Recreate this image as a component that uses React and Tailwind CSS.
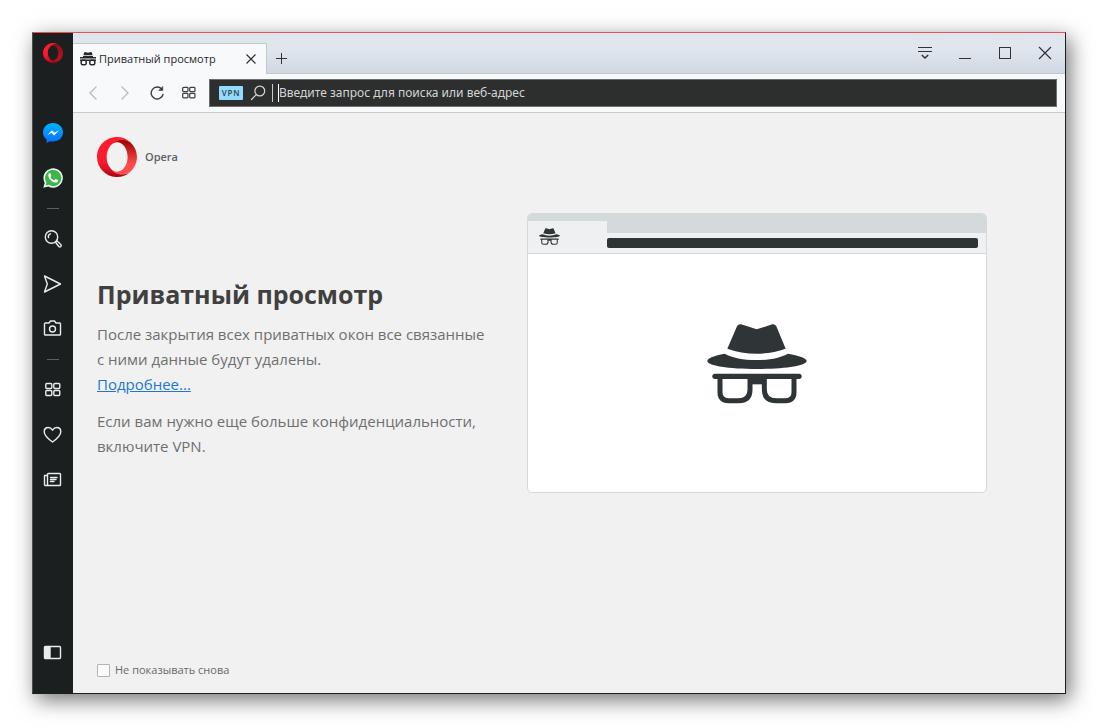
function OperaLogo({ className, id, sideTop, sideBottom }) {
  return (
    <svg viewBox="0 0 80 80" className={className} aria-hidden="true">
      <defs>
        <linearGradient id={id + "-ring"} x1="0" y1="0" x2="0" y2="1">
          <stop offset="0.3" stopColor="#ff1b2d" />
          <stop offset="0.6" stopColor="#fa1a2c" />
          <stop offset="0.8" stopColor="#dc1326" />
          <stop offset="1" stopColor="#a70014" />
        </linearGradient>
        <linearGradient id={id + "-side"} x1="0" y1="0" x2="0" y2="1">
          <stop offset="0" stopColor={sideTop} />
          <stop offset="0.7" stopColor={sideBottom} />
        </linearGradient>
      </defs>
      <path
        fill={"url(#" + id + "-ring)"}
        d="M39.900 0C17.900 0 0 17.900 0 40c0 21.400 16.900 38.900 38 40h1.900c10.200 0 19.600-3.900 26.600-10.200-4.700 3.100-10.200 4.900-16 4.900-9.500 0-18-4.700-23.700-12.100-4.400-5.200-7.300-12.900-7.500-21.500v-2.200c.2-8.600 3.100-16.300 7.500-21.500C32.500 10 41 5.300 50.500 5.300c5.800 0 11.300 1.800 16 4.900C59.500 3.900 50.200 0 40 0z"
      />
      <path
        fill={"url(#" + id + "-side)"}
        d="M26.800 17.600c3.700-4.300 8.400-6.900 13.500-6.900 11.500 0 20.900 13.100 20.900 29.300s-9.400 29.300-20.900 29.300c-5.100 0-9.900-2.600-13.500-6.900C32.500 69.900 41 74.600 50.500 74.600c5.800 0 11.300-1.800 16-4.900C74.700 62.400 79.900 51.800 79.900 40c0-11.800-5.200-22.400-13.400-29.700-4.700-3.100-10.200-4.900-16-4.900C41 5.300 32.500 10 26.800 17.600"
      />
    </svg>
  );
}

function HatGlasses({ className }) {
  return (
    <svg viewBox="52 42 300 240" className={className} aria-hidden="true">
      <g fill="#2f3537">
        <path d="M142 49Q146 42 154 43L201 58 248 43Q256 42 260 49L288 116Q248 131 201 131T113 116Z" />
        <path d="M105 131C128 143 160 150 201 150S273 143 295 131C328 137 351 144 351 153C351 167 285 177 201 177S53 167 53 153C53 144 74 137 105 131Z" />
        <rect x="68" y="191" width="268" height="16" rx="8" />
        <rect x="176" y="200" width="52" height="23" />
      </g>
      <g fill="none" stroke="#2f3537" strokeWidth="15">
        <path d="M91 200V247Q91 272 116 272H146Q181 272 181 239V200" />
        <path d="M313 200V247Q313 272 288 272H260Q224 272 224 239V200" />
      </g>
    </svg>
  );
}

function TabHat({ className }) {
  return (
    <svg viewBox="0 0 16 14" className={className} aria-hidden="true">
      <path fill="#25292b" d="M4.200.7Q4.400 0 5.100.1L8 .7 10.900.1Q11.600 0 11.800.7L12.600 3.200H3.400ZM3 4H13V5H16V6.500H0V5H3Z" />
      <path fill="#25292b" d="M0 7.500H16V9H0Z" />
      <g fill="none" stroke="#25292b" strokeWidth="1.500">
        <rect x="1.200" y="8.200" width="5" height="4.600" rx="1.600" />
        <rect x="9.800" y="8.200" width="5" height="4.600" rx="1.600" />
      </g>
    </svg>
  );
}

function Line({ viewBox = "0 0 20 20", className = "size-5", width = 1.4, children }) {
  return (
    <svg viewBox={viewBox} className={className} fill="none" stroke="currentColor" strokeWidth={width} strokeLinecap="round" strokeLinejoin="round" aria-hidden="true">
      {children}
    </svg>
  );
}

function FourTiles({ className }) {
  return (
    <Line className={className} viewBox="0 0 16 16" width={1.4}>
      <rect x="0.800" y="1.500" width="6" height="5" rx="1" />
      <rect x="8.800" y="1.500" width="6" height="5" rx="1" />
      <rect x="0.800" y="8.500" width="6" height="5" rx="1" />
      <rect x="8.800" y="8.500" width="6" height="5" rx="1" />
    </Line>
  );
}

function SideButton({ label, children }) {
  return (
    <button type="button" aria-label={label} className="flex h-[45px] w-full items-center justify-center text-[#e9ecec]">
      {children}
    </button>
  );
}

function Divider() {
  return (
    <div className="flex h-4 items-center justify-center">
      <div className="h-px w-3 bg-[#5d6162]" />
    </div>
  );
}

function Sidebar() {
  return (
    <nav className="flex w-10 shrink-0 flex-col bg-[#1b1f20] pb-[18px]">
      <button type="button" aria-label="Opera" className="mb-[37px] flex h-10 items-center justify-center">
        <OperaLogo id="menu" sideTop="#8f0d18" sideBottom="#b5101e" className="size-5" />
      </button>
      <SideButton label="Messenger">
        <svg viewBox="0 0 20 20" className="size-5" aria-hidden="true">
          <defs>
            <linearGradient id="msg" x1="0" y1="0" x2="0" y2="1">
              <stop offset="0" stopColor="#00b5ff" />
              <stop offset="1" stopColor="#0a6cff" />
            </linearGradient>
          </defs>
          <path fill="url(#msg)" d="M10 0C4.400 0 0 4 0 9.400c0 2.900 1.300 5.300 3.600 7V20l3.300-1.800c1 .3 2 .4 3.100.4 5.600 0 10-4 10-9.300S15.600 0 10 0z" />
          <path fill="#fff" d="M4.200 12.300 9 7.200l2.500 2.600 4.500-2.600-4.900 5.200-2.500-2.700z" />
        </svg>
      </SideButton>
      <SideButton label="WhatsApp">
        <svg viewBox="0 0 20 20" className="size-5" aria-hidden="true">
          <path fill="#f2f4f2" d="M.3 19.800 1.700 14.700A9.700 9.700 0 1 1 5.400 18.400z" />
          <path fill="#3bb54a" d="m2.500 17.600.9-3.200a8.100 8.100 0 1 1 2.400 2.400z" />
          <path fill="#fff" d="M6.900 5c-.9.300-1.700 1.200-1.600 2.500.2 3.400 4 7 7.500 7.100 1.300 0 2.300-.9 2.400-2.100 0-.3-.1-.4-.4-.5l-1.900-.9c-.3-.1-.5 0-.7.200l-.7.9c-.2.200-.4.200-.6.100-1.400-.6-2.600-1.700-3.300-3-.1-.2-.1-.4.100-.6l.5-.7c.1-.2.2-.4.100-.6L7.500 5.400C7.400 5.100 7.200 5 6.900 5z" />
        </svg>
      </SideButton>
      <Divider />
      <SideButton label="Поиск">
        <Line>
          <circle cx="8.500" cy="8" r="6.200" />
          <path d="M5.500 8.500a3 3 0 0 1 2-3.700M12.700 13.500l1.400-1.400 3.700 3.400a1.400 1.400 0 0 1-2 2z" />
        </Line>
      </SideButton>
      <SideButton label="Мой поток">
        <Line>
          <path d="M1.500 2 17.500 10 1.500 18 4.300 10z" />
        </Line>
      </SideButton>
      <SideButton label="Снимок экрана">
        <Line>
          <path d="M2.300 4H6l1.500-2h4L13 4h3.700a.8.800 0 0 1 .8.800v10.400a.8.800 0 0 1-.8.800H2.300a.8.800 0 0 1-.8-.8V4.800a.8.800 0 0 1 .8-.8z" />
          <circle cx="9.500" cy="10" r="3" />
        </Line>
      </SideButton>
      <Divider />
      <SideButton label="Экспресс-панель">
        <FourTiles className="size-4" />
      </SideButton>
      <SideButton label="Закладки">
        <Line>
          <path d="M9.500 17C4.500 13.300 1.200 10.300 1.200 6.700 1.200 4.200 3 2.500 5.200 2.500c1.900 0 3.300 1 4.300 2.700 1-1.700 2.400-2.700 4.300-2.700 2.200 0 4 1.700 4 4.200 0 3.600-3.300 6.600-8.300 10.300z" />
        </Line>
      </SideButton>
      <SideButton label="Новости">
        <Line>
          <path d="M4.500 15.500V4.300a.8.800 0 0 1 .8-.8h11.400a.8.800 0 0 1 .8.800v10.400a.8.800 0 0 1-.8.800H2.500a1 1 0 0 1-1-1V5.500H4M7.500 7.500H14M7.500 9.500H13M7.500 11.500H11" />
        </Line>
      </SideButton>
      <div className="mt-auto">
        <SideButton label="Боковая панель">
          <Line>
            <rect x="1.500" y="3.500" width="16" height="12" rx="1" />
            <path d="M2 4h5v11H2z" fill="currentColor" />
          </Line>
        </SideButton>
      </div>
    </nav>
  );
}

function WindowButton({ label, children }) {
  return (
    <button type="button" aria-label={label} className="flex h-10 w-10 items-center justify-center text-[#2f3335]">
      <svg viewBox="0 0 16 16" className="size-4" fill="none" stroke="currentColor" strokeWidth="1" aria-hidden="true">
        {children}
      </svg>
    </button>
  );
}

function TabStrip() {
  return (
    <header className="flex h-[41px] border-b border-[#c3c8cc] bg-linear-to-b from-[#dfe6ee] from-40% to-[#d2d8e1]">
      <div className="mt-[10px] -mb-px flex h-[31px] w-[194px] items-center border-t border-r border-[#c3c8cc] bg-[#f8f9fb] pl-[7px] text-[11px] text-[#26292b]">
        <TabHat className="mr-[3px] h-[14px] w-4 shrink-0" />
        <span className="flex-1 whitespace-nowrap">Приватный просмотр</span>
        <button type="button" aria-label="Закрыть вкладку" className="mr-[7px] flex size-4 items-center justify-center">
          <svg viewBox="0 0 10 10" className="size-[10px]" stroke="#2f3335" strokeWidth="1.200" aria-hidden="true">
            <path d="M.5.500 9.500 9.500M9.500.500.500 9.500" />
          </svg>
        </button>
      </div>
      <button type="button" aria-label="Новая вкладка" className="mt-[10px] flex h-[30px] w-[29px] items-center justify-center">
        <svg viewBox="0 0 11 11" className="size-[11px]" stroke="#2f3335" strokeWidth="1" aria-hidden="true">
          <path d="M5.500 0V11M0 5.500H11" />
        </svg>
      </button>
      <div className="ml-auto flex">
        <WindowButton label="Меню вкладок">
          <path d="M1 2.500H15M1 6.500H15" />
          <path d="M4.800 10 8 13 11.200 10" strokeWidth="1.500" />
        </WindowButton>
        <WindowButton label="Свернуть">
          <path d="M2 13.500H14" />
        </WindowButton>
        <WindowButton label="Развернуть">
          <rect x="2.500" y="2.500" width="11" height="11" />
        </WindowButton>
        <WindowButton label="Закрыть">
          <path d="M2 2 14 14M14 2 2 14" strokeWidth="1.200" />
        </WindowButton>
      </div>
    </header>
  );
}

function ToolButton({ label, dim, children }) {
  return (
    <button
      type="button"
      aria-label={label}
      className={dim ? "flex h-7 w-8 items-center justify-center text-[#b9bdc0]" : "flex h-7 w-8 items-center justify-center text-[#3b3f41]"}
    >
      {children}
    </button>
  );
}

function Toolbar() {
  return (
    <div className="flex items-center border-b border-[#c6cbcd] bg-[#f8f9fb] py-[5px] pr-2 pl-1">
      <ToolButton label="Назад" dim>
        <Line viewBox="0 0 16 16" className="size-4"><path d="M11 2 5 8l6 6" /></Line>
      </ToolButton>
      <ToolButton label="Вперёд" dim>
        <Line viewBox="0 0 16 16" className="size-4"><path d="M5 2l6 6-6 6" /></Line>
      </ToolButton>
      <ToolButton label="Обновить">
        <Line viewBox="0 0 16 16" className="size-4" width={1.4}>
          <path d="M14 9.500A6 6 0 1 1 12.800 4.200" />
          <path d="M13.800 1.800V5.500H10z" fill="currentColor" strokeWidth="0.600" />
        </Line>
      </ToolButton>
      <ToolButton label="Экспресс-панель">
        <FourTiles className="size-[14px]" />
      </ToolButton>
      <form className="ml-1 flex h-7 min-w-0 flex-1 items-center border border-[#6c6f6f] bg-[#2d2f2f] pl-[9px]">
        <button type="button" className="h-[14px] w-6 rounded-[1px] bg-[#94dcff] text-center text-[8px] leading-[14px] font-semibold tracking-widest text-[#2d3f48]">
          VPN
        </button>
        <Line viewBox="0 0 16 16" className="mr-[6px] ml-[7px] size-4 text-[#d5d7d7]" width={1.2}>
          <circle cx="9.800" cy="6" r="4.900" />
          <path d="M6.300 9.700 1.500 14.500" />
        </Line>
        <div className="mr-[5px] h-[18px] w-px bg-[#c9cbcb]" />
        <input
          type="text"
          aria-label="Адресная строка"
          placeholder="Введите запрос для поиска или веб-адрес"
          className="h-[18px] min-w-0 flex-1 border-l border-white bg-transparent font-['Noto_Sans',sans-serif] text-[12px] leading-[18px] text-white outline-none placeholder:text-[#d3d5d5]"
        />
      </form>
    </div>
  );
}

function PreviewWindow() {
  return (
    <div className="flex h-[280px] w-[460px] shrink-0 flex-col overflow-hidden rounded-[5px] border border-[#d4dadc] bg-white">
      <div className="flex h-10 border-b border-[#d4dadc] bg-[#eff0f2]">
        <div className="flex w-[79px] flex-col border-t-[7px] border-[#d4dadc] pt-[7px] pl-[11px]">
          <HatGlasses className="h-[17px] w-[21px]" />
        </div>
        <div className="flex-1 border-t-[19px] border-[#d4dadc] pt-[5px] pr-2">
          <div className="h-[10px] rounded-[2px] bg-[#2f3537]" />
        </div>
      </div>
      <div className="flex flex-1 items-center justify-center pb-[18px]">
        <HatGlasses className="h-20 w-[100px]" />
      </div>
    </div>
  );
}

function StartPage() {
  return (
    <main className="flex flex-1 flex-col bg-[#f1f1f1] px-6 pt-6 pb-[13px]">
      <div className="flex items-center gap-2">
        <OperaLogo id="logo" sideTop="#9c0000" sideBottom="#ff4b4b" className="size-10" />
        <span className="text-[11px] font-semibold text-[#5d6163]">Opera</span>
      </div>
      <section className="mt-9 flex items-center gap-10">
        <div className="min-w-0 max-w-[390px] flex-1 pt-7 text-[15px] leading-[25px] text-[#6f6f6f]">
          <h1 className="mb-[10px] text-[25px] leading-9 font-bold text-[#404040]">Приватный просмотр</h1>
          <p>
            После закрытия всех приватных окон все связанные с ними данные будут удалены.
            <br />
            <a href="#more" className="text-[#1c78d2] underline">Подробнее...</a>
          </p>
          <p className="mt-3">Если вам нужно еще больше конфиденциальности, включите VPN.</p>
        </div>
        <PreviewWindow />
      </section>
      <label className="mt-auto flex h-5 items-center gap-[5px] self-start text-[11px] text-[#6a6a6a]">
        <input type="checkbox" className="size-[13px] appearance-none rounded-[1px] border border-[#b4b4b4] bg-[#fbfbfb] checked:bg-[#1c78d2]" />
        Не показывать снова
      </label>
    </main>
  );
}

export default function App() {
  return (
    <div className="flex min-h-screen bg-white p-8 font-['Open_Sans','Noto_Sans',sans-serif]">
      <div className="flex flex-1 border border-t-[#ea5058] border-r-[#1b1f20] border-b-[#1b1f20] border-l-[#4a4d4e] shadow-[4px_6px_20px_0px_rgba(0,0,0,0.55)]">
        <Sidebar />
        <div className="flex min-w-0 flex-1 flex-col">
          <TabStrip />
          <Toolbar />
          <StartPage />
        </div>
      </div>
    </div>
  );
}
